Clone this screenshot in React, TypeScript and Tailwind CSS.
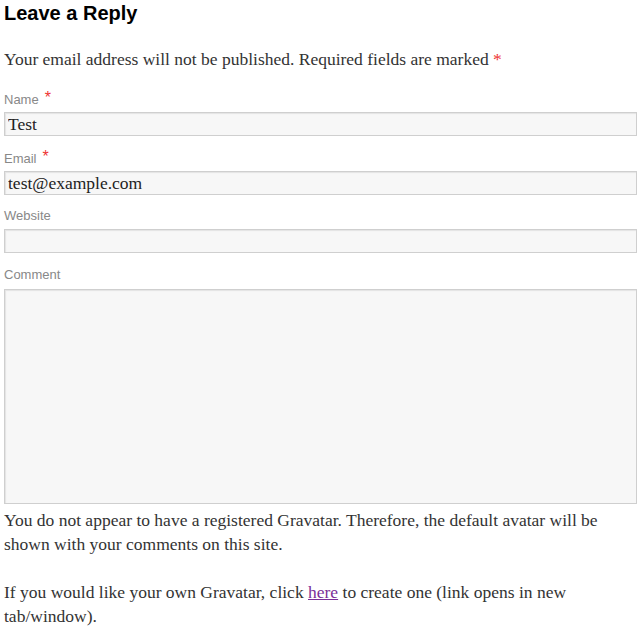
const serif = { fontFamily: '"Liberation Serif", "DejaVu Serif", serif' };

function Label({ text, required }: { text: string; required?: boolean }) {
  return (
    <label className="block h-[16px] text-[13px] leading-[16px] text-[#888] font-['Liberation_Sans',Arial,sans-serif]">
      {text}
      {required && (
        <span className="relative -top-[1px] ml-[6px] text-[16px] leading-[16px] text-[#e33]">*</span>
      )}
    </label>
  );
}

function Field({ value }: { value?: string }) {
  return (
    <input
      readOnly
      value={value ?? ''}
      className="mt-[5px] block h-[24px] w-[633px] border border-[#cfcfcf] bg-[#f7f7f7] px-[3px] text-[17.5px] leading-[22px] text-[#222] shadow-[inset_1px_1px_1px_rgba(0,0,0,0.08)] outline-none font-['Liberation_Serif',Georgia,serif]"
    />
  );
}

export default function App() {
  return (
    <div className="min-h-[631px] w-[644px] bg-white pl-[4px] pr-[7px] pt-[1px] text-[#333]">
      <h3 className="text-[20px] font-bold leading-[24px] text-black font-['Liberation_Sans',Arial,sans-serif]">
        Leave a Reply
      </h3>

      <p className="mt-[22px] text-[17.5px] leading-[24px] text-[#333]" style={serif}>
        Your email address will not be published. Required fields are marked{' '}
        <span className="text-[#e33]">*</span>
      </p>

      <div className="mt-[20px]">
        <Label text="Name" required />
        <Field value="Test" />
      </div>

      <div className="mt-[14px]">
        <Label text="Email" required />
        <Field value="test@example.com" />
      </div>

      <div className="mt-[13px]">
        <Label text="Website" />
        <Field />
      </div>

      <div className="mt-[14px]">
        <Label text="Comment" />
        <textarea
          readOnly
          className="mt-[6px] block h-[215px] w-[633px] resize-none border border-[#cfcfcf] bg-[#f7f7f7] shadow-[inset_1px_1px_1px_rgba(0,0,0,0.08)] outline-none"
        />
      </div>

      <p className="mt-[4px] text-[17.5px] leading-[24px] text-[#333]" style={serif}>
        You do not appear to have a registered Gravatar. Therefore, the default avatar will be shown
        with your comments on this site.
      </p>

      <p className="mt-[24px] text-[17.5px] leading-[24px] text-[#333]" style={serif}>
        If you would like your own Gravatar, click{' '}
        <a href="#" className="text-[#7b2f98] underline">
          here
        </a>{' '}
        to create one (link opens in new tab/window).
      </p>
    </div>
  );
}
